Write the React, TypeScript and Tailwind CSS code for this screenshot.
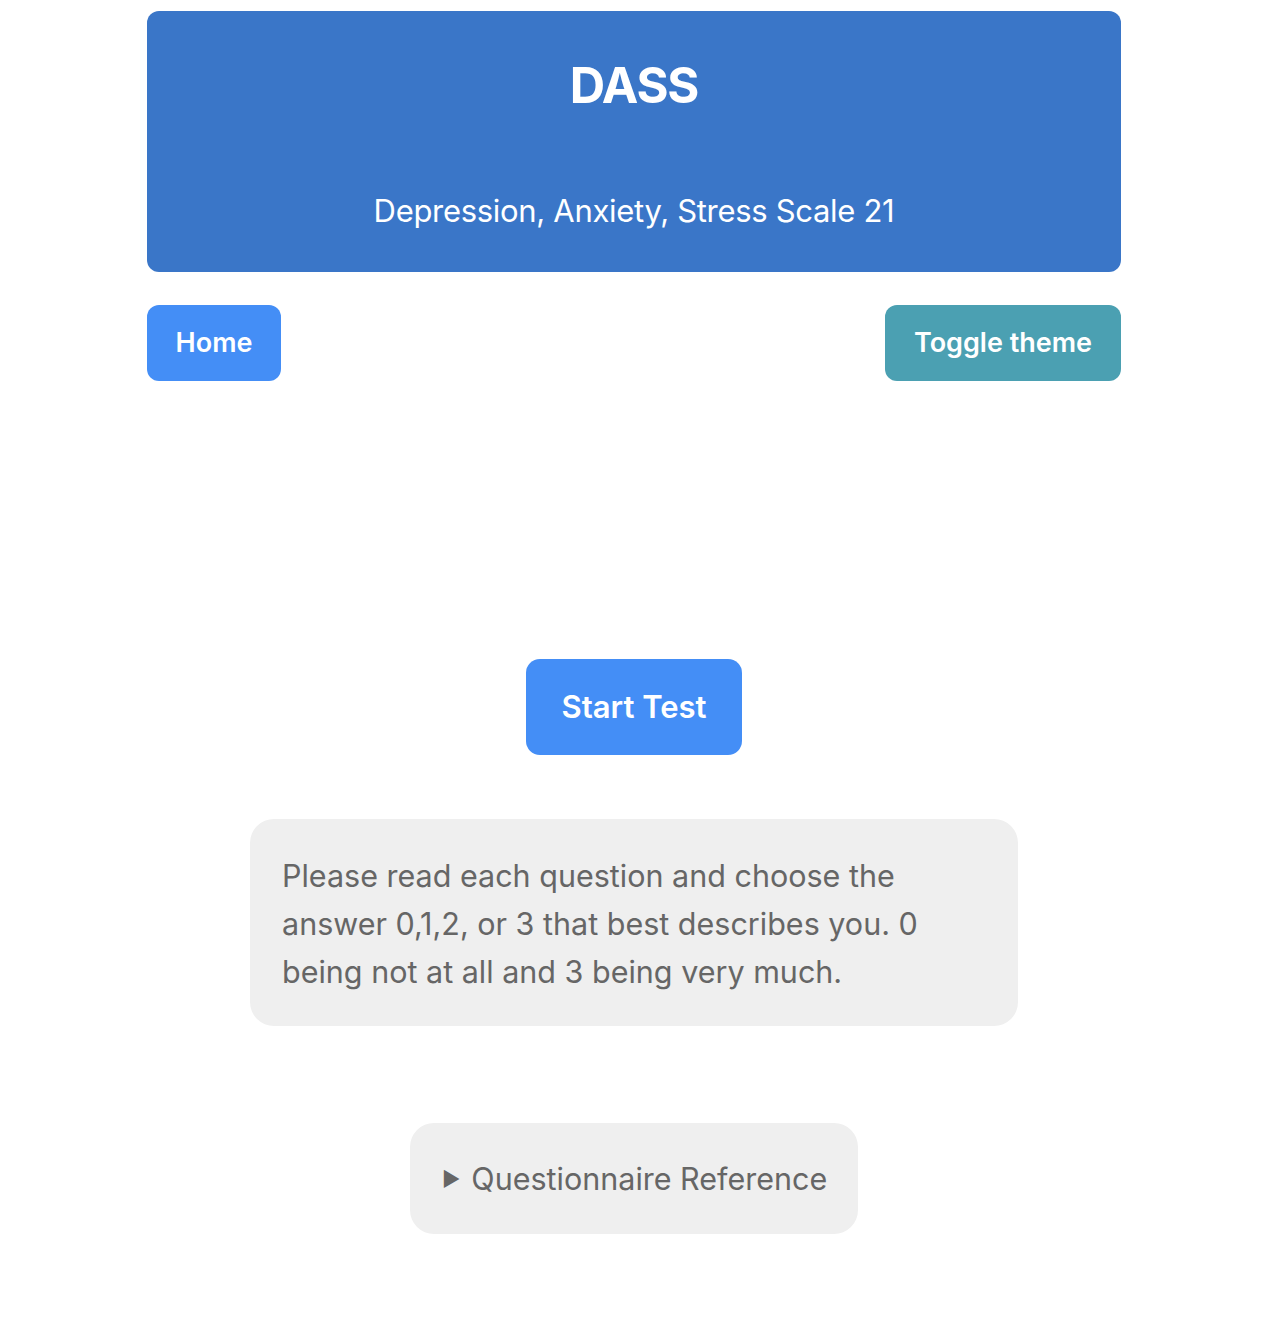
export default function App() {
  return (
    <div className="min-h-[1328px] bg-white font-['Inter','Liberation_Sans',sans-serif]">
      <div className="ml-[147px] flex w-[974px] flex-col pt-[11px]">
        <header className="flex h-[261px] flex-col items-center rounded-xl bg-[#3a76c8] text-white">
          <h1 className="mt-[50px] text-[49px] font-bold leading-none tracking-tight">DASS</h1>
          <p className="mt-[85px] text-[31px] leading-none tracking-[-0.01em]">
            Depression, Anxiety, Stress Scale 21
          </p>
        </header>

        <nav className="mt-[33px] flex justify-between">
          <button className="h-[76px] w-[134px] rounded-xl bg-[#448ef6] text-[27px] font-semibold text-white">
            Home
          </button>
          <button className="h-[76px] w-[236px] rounded-xl bg-[#4ba0b2] text-[27px] font-semibold text-white">
            Toggle theme
          </button>
        </nav>

        <main className="mt-[278px] flex flex-col items-center">
          <button className="h-[96px] w-[216px] rounded-[14px] bg-[#448ef6] text-[31px] font-semibold text-white">
            Start Test
          </button>

          <div className="mt-[64px] w-[768px] rounded-3xl bg-[#efefef] px-8 pt-[33px] pb-[30px] text-[30.5px] leading-[48px] text-[#666666]">
            Please read each question and choose the answer 0,1,2, or 3 that best describes you. 0 being not at all
            and 3 being very much.
          </div>

          <details className="mt-[97px] w-[448px] rounded-3xl bg-[#efefef] pl-[32px] pr-[20px] pt-[32px] pb-[31px] text-[30.5px] leading-[48px] text-[#666666]">
            <summary className="flex cursor-pointer list-none items-center whitespace-nowrap [&::-webkit-details-marker]:hidden">
              <span className="mr-[11px] text-[20px] leading-none">▶</span>
              Questionnaire Reference
            </summary>
          </details>
        </main>
      </div>
    </div>
  );
}
